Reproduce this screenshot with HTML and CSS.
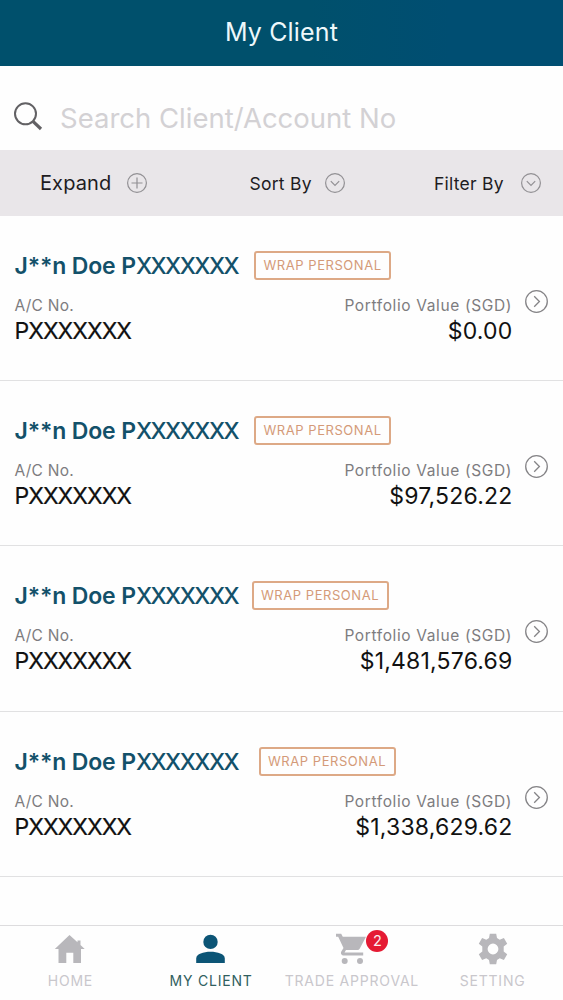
FILE: index.html
```html
<!DOCTYPE html>
<html lang="en">
<head>
<meta charset="utf-8">
<title>My Client</title>
<link rel="stylesheet" href="styles.css">
</head>
<body>
<svg width="0" height="0" class="defs" aria-hidden="true">
  <symbol id="down" viewBox="0 0 20 20"><circle cx="10" cy="10" r="9.4"/><path d="M5.8 8.2l4.2 4.2 4.2-4.2"/></symbol>
  <symbol id="next" viewBox="0 0 23 23"><circle cx="11.5" cy="11.5" r="10.8"/><path d="M9.2 6.3l5.2 5.2-5.2 5.2"/></symbol>
</svg>
<div class="app">
  <header class="header"><h1 class="title">My Client</h1></header>
  <div class="search">
    <svg class="search-icon" viewBox="0 0 30 30"><circle cx="12.500" cy="11.800" r="10.500" stroke-width="2"/><path d="M20 19.300l8 7.700" stroke-width="3.200"/></svg>
    <span class="placeholder">Search Client/Account No</span>
  </div>
  <div class="toolbar">
    <div class="tool expand"><span class="tool-label">Expand</span><svg class="ring" viewBox="0 0 20 20"><circle cx="10" cy="10" r="9.4"/><path d="M10 4.5v11M4.5 10h11"/></svg></div>
    <div class="tool sort"><span class="tool-label">Sort By</span><svg class="ring"><use href="#down"/></svg></div>
    <div class="tool filter"><span class="tool-label">Filter By</span><svg class="ring"><use href="#down"/></svg></div>
  </div>
  <main class="list">
    <section class="client">
      <div class="top"><h2 class="name">J**n Doe P<span class="mask">XXXXXXX</span></h2><span class="tag">WRAP PERSONAL</span></div>
      <div class="details">
        <div class="account"><div class="label">A/C No.</div><div class="number">PXXXXXXX</div></div>
        <div class="portfolio"><div class="label">Portfolio Value (SGD)</div><div class="value">$0.00</div></div>
        <svg class="next"><use href="#next"/></svg>
      </div>
    </section>
    <section class="client">
      <div class="top"><h2 class="name">J**n Doe P<span class="mask">XXXXXXX</span></h2><span class="tag">WRAP PERSONAL</span></div>
      <div class="details">
        <div class="account"><div class="label">A/C No.</div><div class="number">PXXXXXXX</div></div>
        <div class="portfolio"><div class="label">Portfolio Value (SGD)</div><div class="value">$97,526.22</div></div>
        <svg class="next"><use href="#next"/></svg>
      </div>
    </section>
    <section class="client">
      <div class="top near"><h2 class="name">J**n Doe P<span class="mask">XXXXXXX</span></h2><span class="tag">WRAP PERSONAL</span></div>
      <div class="details">
        <div class="account"><div class="label">A/C No.</div><div class="number">PXXXXXXX</div></div>
        <div class="portfolio"><div class="label">Portfolio Value (SGD)</div><div class="value">$1,481,576.69</div></div>
        <svg class="next"><use href="#next"/></svg>
      </div>
    </section>
    <section class="client">
      <div class="top far"><h2 class="name">J**n Doe P<span class="mask">XXXXXXX</span></h2><span class="tag">WRAP PERSONAL</span></div>
      <div class="details">
        <div class="account"><div class="label">A/C No.</div><div class="number">PXXXXXXX</div></div>
        <div class="portfolio"><div class="label">Portfolio Value (SGD)</div><div class="value">$1,338,629.62</div></div>
        <svg class="next"><use href="#next"/></svg>
      </div>
    </section>
  </main>
  <nav class="tabs">
    <div class="tab">
      <svg class="tab-icon" viewBox="0 0 32 32"><path d="M15.500 2L.8 16H4.500v14h7.800V19.800h7V30H27V16h3.700L26.500 12V7.500h-3v1.700z"/></svg>
      <span class="tab-label">HOME</span>
    </div>
    <div class="tab active">
      <svg class="tab-icon" viewBox="0 0 32 32"><circle cx="15.500" cy="8.900" r="7.200"/><path d="M1.200 30v-4.500C1.200 21 8.500 18.800 15.500 18.800S29.800 21 29.800 25.500V30z"/></svg>
      <span class="tab-label">MY CLIENT</span>
    </div>
    <div class="tab">
      <div class="cart">
        <svg class="tab-icon" viewBox="0 0 32 32"><path d="M1 .7h5.200l1.600 3H31L24.800 15.500q-.8 1.500-2.400 1.500H11l-1.500 2.600h18.700v3H9c-2.500 0-3.700-2-2.700-4l2.200-3.700L3.200 3.700H1z"/><circle cx="9.700" cy="28" r="3"/><circle cx="25" cy="28" r="3"/></svg>
        <span class="count">2</span>
      </div>
      <span class="tab-label">TRADE APPROVAL</span>
    </div>
    <div class="tab">
      <svg class="tab-icon" viewBox="0 0 32 32"><path fill-rule="evenodd" d="M12.800.7h6.400l.8 4.400 2.700 1.600 4.200-1.600 3.300 5.600-3.500 2.900v4.800l3.500 2.900-3.300 5.600-4.200-1.600-2.700 1.600-.8 4.400h-6.400l-.8-4.400-2.700-1.600-4.200 1.600-3.300-5.600 3.500-2.900v-4.800l-3.500-2.900 3.300-5.600 4.200 1.600L12 5.100zM16 10.600a5.400 5.400 0 100 10.800 5.400 5.400 0 000-10.800z"/></svg>
      <span class="tab-label">SETTING</span>
    </div>
  </nav>
</div>
</body>
</html>
```
FILE: styles.css
```css
* { box-sizing: border-box; }
body { margin: 0; background: #fefefe; font-family: Inter, "Liberation Sans", sans-serif; color: #111; }
h1, h2 { margin: 0; font-weight: 400; }
svg { display: block; flex: none; }
.defs { position: absolute; }
.app { width: 563px; height: 1000px; display: flex; flex-direction: column; overflow: hidden; white-space: nowrap; }
.header { height: 65.5px; flex: none; background: linear-gradient(90deg, #00506c 55%, #004e72 80%); color: #eef8fb; display: flex; justify-content: center; padding-top: 16px; }
.title { font-size: 25px; line-height: 32px; letter-spacing: .15px; }
.search { height: 84.500px; flex: none; display: flex; padding: 36px 0 0 13px; }
.search-icon { width: 30px; height: 30px; fill: none; stroke: #626164; }
.placeholder { margin-left: 17px; font-size: 27.500px; line-height: 33px; color: #d3d1d4; }
.toolbar { height: 65.500px; flex: none; background: #e9e6e9; display: flex; align-items: center; padding: 0 22px 0 40px; color: #1e1c1f; }
.tool { display: flex; align-items: center; justify-content: space-between; font-size: 17.500px; letter-spacing: .25px; }
.tool-label { padding-top: 1px; }
.expand { width: 107px; font-size: 20px; letter-spacing: .1px; }
.sort { width: 95.500px; margin-left: 102.500px; }
.filter { width: 107px; margin-left: auto; }
.ring { width: 20px; height: 20px; fill: none; stroke: #929094; stroke-width: 1.200; }
.list { flex: 1; }
.client { height: 165.400px; border-bottom: 1.500px solid #e1e1e2; padding: 35px 15px 0 14.500px; }
.top { display: flex; gap: 15px; align-items: center; height: 29px; }
.near { gap: 12.500px; }
.far { gap: 19.500px; }
.name { width: 224.500px; flex: none; font-size: 23px; font-weight: 600; color: #13516a; line-height: 29px; padding-top: 2px; letter-spacing: -.15px; }
.mask { font-weight: 500; letter-spacing: -1.500px; }
.tag { width: 137px; flex: none; height: 29px; border: 2px solid #dda986; border-radius: 3px; color: #d49a78; font-size: 13px; line-height: 24px; text-align: center; letter-spacing: .55px; }
.details { display: flex; margin-top: 15px; }
.label { font-size: 15.500px; line-height: 22px; color: #7d7c7f; letter-spacing: .25px; }
.number, .value { font-size: 23px; line-height: 29px; }
.number { letter-spacing: -1px; -webkit-text-stroke: .2px #111; }
.portfolio { margin-left: auto; text-align: right; }
.portfolio .label { letter-spacing: .62px; }
.next { width: 23px; height: 23px; margin: -5px 0 0 13px; fill: none; stroke: #858487; stroke-width: 1.300; }
.value { margin-right: -.5px; letter-spacing: .2px; }
.tabs { height: 75px; flex: none; border-top: 1px solid #dddcde; display: grid; grid-template-columns: repeat(4, 1fr); padding-top: 7px; color: #c9c7cc; }
.tab { display: flex; flex-direction: column; align-items: center; }
.tab-icon { width: 32px; height: 32px; fill: #b8b7bb; }
.tab-label { font-size: 14px; line-height: 20px; margin-top: 6px; letter-spacing: .8px; }
.active { color: #31605f; }
.active .tab-icon { fill: #0c5576; }
.cart { position: relative; left: -.5px; }
.count { position: absolute; left: 31px; top: -3px; width: 22px; height: 22px; border-radius: 50%; background: #e51a33; color: #fbeef0; font-size: 14.500px; line-height: 22px; text-align: center; }
```
